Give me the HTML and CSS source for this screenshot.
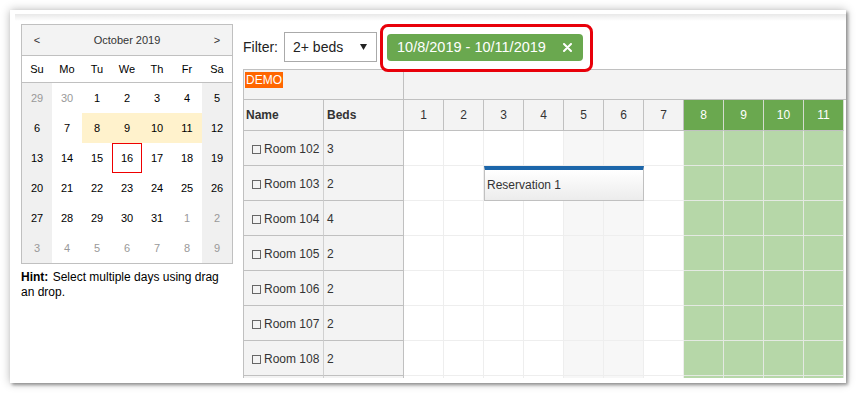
FILE: index.html
```html
<!DOCTYPE html>
<html>
<head>
<meta charset="utf-8">
<link rel="stylesheet" href="styles.css">
</head>
<body>
<div class="card">
  <div class="left">
    <div class="cal">
      <div class="cal-head"><span>&lt;</span><span>October 2019</span><span>&gt;</span></div>
      <div class="cal-dow"><span>Su</span><span>Mo</span><span>Tu</span><span>We</span><span>Th</span><span>Fr</span><span>Sa</span></div>
      <div class="cal-grid">
        <span class="d we o">29</span><span class="d o">30</span><span class="d">1</span><span class="d">2</span><span class="d">3</span><span class="d">4</span><span class="d we">5</span>
        <span class="d we">6</span><span class="d">7</span><span class="d sel">8</span><span class="d sel">9</span><span class="d sel">10</span><span class="d sel">11</span><span class="d we">12</span>
        <span class="d we">13</span><span class="d">14</span><span class="d">15</span><span class="d today">16</span><span class="d">17</span><span class="d">18</span><span class="d we">19</span>
        <span class="d we">20</span><span class="d">21</span><span class="d">22</span><span class="d">23</span><span class="d">24</span><span class="d">25</span><span class="d we">26</span>
        <span class="d we">27</span><span class="d">28</span><span class="d">29</span><span class="d">30</span><span class="d">31</span><span class="d o">1</span><span class="d we o">2</span>
        <span class="d we o">3</span><span class="d o">4</span><span class="d o">5</span><span class="d o">6</span><span class="d o">7</span><span class="d o">8</span><span class="d we o">9</span>
      </div>
    </div>
    <p class="hint"><b>Hint:</b> Select multiple days using drag an drop.</p>
  </div>
  <div class="right">
    <div class="toolbar">
      <span class="flabel">Filter:</span>
      <div class="select"><span>2+ beds</span><svg width="7" height="6" viewBox="0 0 7 6"><polygon points="0,0 7,0 3.5,6" fill="#222"/></svg></div>
      <div class="pillwrap">
        <div class="pill"><span>10/8/2019 - 10/11/2019</span><svg width="9" height="9" viewBox="0 0 9 9"><path d="M1 1L8 8M8 1L1 8" stroke="#fff" stroke-width="2" stroke-linecap="round"/></svg></div>
        <div class="hl"></div>
      </div>
    </div>
    <div class="sched">
      <div class="row r-top"><div class="corner"><span class="demo">DEMO</span></div><div class="fill"></div></div>
      <div class="row r-days">
        <div class="hc hn">Name</div><div class="hc hb">Beds</div>
        <div class="hc hd">1</div><div class="hc hd">2</div><div class="hc hd">3</div><div class="hc hd">4</div><div class="hc hd">5</div><div class="hc hd">6</div><div class="hc hd">7</div>
        <div class="hc hd g">8</div><div class="hc hd g">9</div><div class="hc hd g">10</div><div class="hc hd g">11</div>
      </div>
      <div class="row r">
        <div class="hc rn"><span class="cb"></span>Room 102</div><div class="hc rb">3</div>
        <div class="c"></div><div class="c"></div><div class="c"></div><div class="c"></div><div class="c w"></div><div class="c w"></div><div class="c"></div><div class="c g"></div><div class="c g"></div><div class="c g"></div><div class="c g"></div>
      </div>
      <div class="row r">
        <div class="hc rn"><span class="cb"></span>Room 103</div><div class="hc rb">2</div>
        <div class="c"></div><div class="c"></div><div class="c"></div><div class="c"></div><div class="c w"></div><div class="c w"></div><div class="c"></div><div class="c g"></div><div class="c g"></div><div class="c g"></div><div class="c g"></div>
        <div class="ev">Reservation 1</div>
      </div>
      <div class="row r">
        <div class="hc rn"><span class="cb"></span>Room 104</div><div class="hc rb">4</div>
        <div class="c"></div><div class="c"></div><div class="c"></div><div class="c"></div><div class="c w"></div><div class="c w"></div><div class="c"></div><div class="c g"></div><div class="c g"></div><div class="c g"></div><div class="c g"></div>
      </div>
      <div class="row r">
        <div class="hc rn"><span class="cb"></span>Room 105</div><div class="hc rb">2</div>
        <div class="c"></div><div class="c"></div><div class="c"></div><div class="c"></div><div class="c w"></div><div class="c w"></div><div class="c"></div><div class="c g"></div><div class="c g"></div><div class="c g"></div><div class="c g"></div>
      </div>
      <div class="row r">
        <div class="hc rn"><span class="cb"></span>Room 106</div><div class="hc rb">2</div>
        <div class="c"></div><div class="c"></div><div class="c"></div><div class="c"></div><div class="c w"></div><div class="c w"></div><div class="c"></div><div class="c g"></div><div class="c g"></div><div class="c g"></div><div class="c g"></div>
      </div>
      <div class="row r">
        <div class="hc rn"><span class="cb"></span>Room 107</div><div class="hc rb">2</div>
        <div class="c"></div><div class="c"></div><div class="c"></div><div class="c"></div><div class="c w"></div><div class="c w"></div><div class="c"></div><div class="c g"></div><div class="c g"></div><div class="c g"></div><div class="c g"></div>
      </div>
      <div class="row r">
        <div class="hc rn"><span class="cb"></span>Room 108</div><div class="hc rb">2</div>
        <div class="c"></div><div class="c"></div><div class="c"></div><div class="c"></div><div class="c w"></div><div class="c w"></div><div class="c"></div><div class="c g"></div><div class="c g"></div><div class="c g"></div><div class="c g"></div>
      </div>
      <div class="row r">
        <div class="hc rn"></div><div class="hc rb"></div>
        <div class="c"></div><div class="c"></div><div class="c"></div><div class="c"></div><div class="c w"></div><div class="c w"></div><div class="c"></div><div class="c g"></div><div class="c g"></div><div class="c g"></div><div class="c g"></div>
      </div>
    </div>
  </div>
</div>
</body>
</html>
```
FILE: styles.css
```css
* { box-sizing: border-box; }
body { margin: 0; background: #fff; font-family: "Liberation Sans", Arial, sans-serif; }

.card {
  position: relative;
  margin: 10px;
  width: 836px;
  height: 373px;
  background: #fff;
  box-shadow: 2px 2px 3px rgba(0,0,0,0.35), 0 0 9px rgba(0,0,0,0.28);
  overflow: hidden;
  display: flex;
  gap: 10px;
  padding-left: 11px;
}
.card::before {
  content: "";
  position: absolute;
  left: 5px;
  right: 0;
  top: 4px;
  height: 7px;
  background: linear-gradient(rgba(0,0,0,0.09), rgba(0,0,0,0));
}

.left { width: 212px; flex: none; margin-top: 14px; }
.cal { border: 1px solid #c0c0c0; font-size: 11px; color: #000; }
.cal-head {
  height: 31px;
  border-bottom: 1px solid #c0c0c0;
  background: #f3f3f3;
  display: grid;
  grid-template-columns: 30px 1fr 30px;
  align-items: center;
  text-align: center;
  color: #333;
}
.cal-dow {
  height: 27px;
  border-bottom: 1px solid #c0c0c0;
  display: grid;
  grid-template-columns: repeat(7, 30px);
  align-items: center;
  text-align: center;
}
.cal-grid { display: grid; grid-template-columns: repeat(7, 30px); grid-auto-rows: 30px; }
.d { display: flex; align-items: center; justify-content: center; }
.we { background: #f0f0f0; }
.o { color: #999; }
.sel { background: #fff2cc; }
.today { box-shadow: inset 0 0 0 1px #e00; }
.hint { margin: 6px 0 0; font-size: 12px; line-height: 15px; color: #000; }
.hint b { margin-right: 1px; }

.right { width: 603px; flex: none; padding-top: 22px; }
.toolbar { display: flex; align-items: center; height: 30px; font-size: 14px; color: #222; }
.flabel { margin-right: 6px; }
.select {
  width: 93px;
  height: 30px;
  border: 1px solid #aaa;
  display: flex;
  align-items: center;
  justify-content: space-between;
  padding: 0 9px 0 8px;
}
.pillwrap { position: relative; margin-left: 10px; }
.pill {
  width: 196px;
  height: 27px;
  border-radius: 4px;
  background: #6aa84f;
  color: #fff;
  font-size: 14.5px;
  display: flex;
  align-items: center;
  justify-content: space-between;
  padding: 0 11px 0 10px;
}
.hl {
  position: absolute;
  left: -7px;
  top: -10px;
  width: 213px;
  height: 48px;
  border: 3px solid #e8000a;
  border-radius: 8px;
}

.sched {
  margin-top: 7px;
  height: 309px;
  border-left: 1px solid #c0c0c0;
  border-top: 1px solid #c0c0c0;
  overflow: hidden;
  font-size: 12px;
  color: #333;
  background: #fff;
}
.row { display: flex; flex: none; }
.r-top { height: 30px; border-bottom: 1px solid #c0c0c0; background: #f3f3f3; }
.corner { width: 160px; border-right: 1px solid #c0c0c0; padding: 2px 0 0 1px; }
.demo { display: inline-block; background: #ff6600; color: #fff; height: 16px; line-height: 16px; padding: 0 1px; }
.fill { flex: 1; }
.r-days { height: 31px; }
.hc {
  flex: none;
  border-right: 1px solid #c0c0c0;
  border-bottom: 1px solid #c0c0c0;
  background: #f3f3f3;
  display: flex;
  align-items: center;
}
.hn { width: 80px; padding-left: 2px; font-weight: bold; }
.hb { width: 80px; padding-left: 3px; font-weight: bold; }
.hd { width: 40px; justify-content: center; }
.hd.g { background: #6aa84f; color: #fff; border-right-color: #d4dccf; }
.r { height: 35px; position: relative; }
.rn { width: 80px; padding: 2px 0 0 8px; border-right-color: #d0d0d0; }
.rb { width: 80px; padding: 2px 0 0 3px; }
.c { flex: none; width: 40px; border-right: 1px solid #eee; border-bottom: 1px solid #eee; }
.c.w { background: #f7f7f7; }
.c.g { background: #b6d7a8; border-color: #e4e9e2; }
.cb { width: 9px; height: 9px; border: 1px solid #666; margin-right: 3px; flex: none; }
.ev {
  position: absolute;
  left: 240px;
  top: 0;
  width: 160px;
  height: 35px;
  border: 1px solid #c0c0c0;
  border-top: 4px solid #1c66aa;
  background: linear-gradient(#fff, #ececec);
  padding-left: 2px;
  display: flex;
  align-items: center;
  color: #333;
}
```
